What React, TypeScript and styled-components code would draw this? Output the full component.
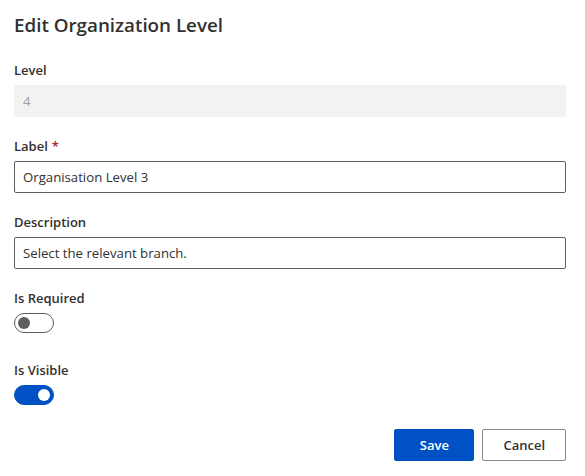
import React, { useState } from "react";
import styled, { createGlobalStyle } from "styled-components";

const Global = createGlobalStyle`
  html, body { margin: 0; padding: 0; background: #ffffff; }
  body { font-family: "Open Sans", "Noto Sans", Arial, sans-serif; color: #323130; -webkit-font-smoothing: antialiased; }
  * { box-sizing: border-box; }
`;

const Panel = styled.div`
  width: 585px;
  padding: 11px 19px 0 14px;
  display: flex;
  flex-direction: column;
`;

const Title = styled.h1`
  margin: 0 0 16px 0;
  font-size: 18.8px;
  line-height: 28px;
  font-weight: 600;
  color: #323130;
`;

const Fields = styled.div`
  display: flex;
  flex-direction: column;
  gap: 14px;
`;

const Field = styled.div`
  display: flex;
  flex-direction: column;
`;

const Label = styled.label`
  display: block;
  padding: 5px 0;
  font-size: 13px;
  line-height: 20px;
  font-weight: 600;
  color: #323130;
`;

const Required = styled.span`
  color: #a4262c;
  padding-left: 4px;
`;

const Input = styled.input<{ $disabled?: boolean }>`
  width: 100%;
  height: 32px;
  margin: 0;
  padding: 0 8px;
  font-family: inherit;
  font-size: 13.2px;
  color: ${(p) => (p.$disabled ? "#a19f9d" : "#323130")};
  background: ${(p) => (p.$disabled ? "#f3f2f1" : "#ffffff")};
  border: 1px solid ${(p) => (p.$disabled ? "#f3f2f1" : "#605e5c")};
  border-radius: 2px;
  outline: none;
`;

const ToggleRoot = styled.div`
  margin-bottom: 8px;
`;

const ToggleTrack = styled.button<{ $on: boolean }>`
  width: 40px;
  height: 20px;
  padding: 0 3px;
  margin: 0;
  display: flex;
  align-items: center;
  justify-content: ${(p) => (p.$on ? "flex-end" : "flex-start")};
  border-radius: 10px;
  border: 1px solid ${(p) => (p.$on ? "#0052c4" : "#605e5c")};
  background: ${(p) => (p.$on ? "#0052c4" : "#ffffff")};
  cursor: pointer;
`;

const Thumb = styled.span<{ $on: boolean }>`
  width: 12px;
  height: 12px;
  border-radius: 50%;
  background: ${(p) => (p.$on ? "#ffffff" : "#605e5c")};
`;

const Footer = styled.div`
  display: flex;
  justify-content: flex-end;
  gap: 8px;
  margin-top: 16px;
`;

const Button = styled.button<{ $primary?: boolean }>`
  min-width: 80px;
  height: 32px;
  padding: 0 20px;
  font-family: inherit;
  font-size: 13px;
  font-weight: 600;
  border-radius: 2px;
  border: 1px solid ${(p) => (p.$primary ? "#0052c4" : "#8a8886")};
  background: ${(p) => (p.$primary ? "#0052c4" : "#ffffff")};
  color: ${(p) => (p.$primary ? "#ffffff" : "#323130")};
  cursor: pointer;
`;

function Toggle({ initial }: { initial: boolean }) {
  const [on, setOn] = useState(initial);
  return (
    <ToggleRoot>
      <ToggleTrack $on={on} onClick={() => setOn(!on)} aria-pressed={on}>
        <Thumb $on={on} />
      </ToggleTrack>
    </ToggleRoot>
  );
}

export default function App() {
  return (
    <>
      <Global />
      <Panel>
        <Title>Edit Organization Level</Title>
        <Fields>
          <Field>
            <Label>Level</Label>
            <Input $disabled disabled value="4" readOnly />
          </Field>
          <Field>
            <Label>
              Label<Required>*</Required>
            </Label>
            <Input defaultValue="Organisation Level 3" />
          </Field>
          <Field>
            <Label>Description</Label>
            <Input defaultValue="Select the relevant branch." />
          </Field>
          <Field>
            <Label>Is Required</Label>
            <Toggle initial={false} />
          </Field>
          <Field>
            <Label>Is Visible</Label>
            <Toggle initial={true} />
          </Field>
        </Fields>
        <Footer>
          <Button $primary>Save</Button>
          <Button>Cancel</Button>
        </Footer>
      </Panel>
    </>
  );
}
